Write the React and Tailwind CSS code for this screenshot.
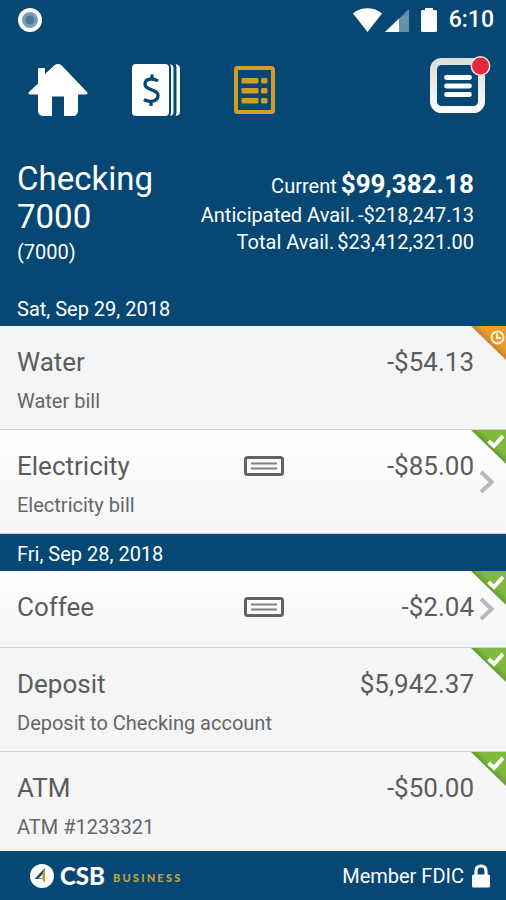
const DAYS = [
  {
    date: 'Sat, Sep 29, 2018',
    items: [
      { id: 1, name: 'Water', memo: 'Water bill', amount: '-$54.13', status: 'pending' },
      {
        id: 2,
        name: 'Electricity',
        memo: 'Electricity bill',
        amount: '-$85.00',
        status: 'cleared',
        hasCheck: true,
      },
    ],
  },
  {
    date: 'Fri, Sep 28, 2018',
    items: [
      { id: 3, name: 'Coffee', amount: '-$2.04', status: 'cleared', hasCheck: true },
      {
        id: 4,
        name: 'Deposit',
        memo: 'Deposit to Checking account',
        amount: '$5,942.37',
        status: 'cleared',
      },
      { id: 5, name: 'ATM', memo: 'ATM #1233321', amount: '-$50.00', status: 'cleared' },
    ],
  },
];

function StatusBar() {
  return (
    <div className="flex h-10 items-center justify-between pl-[18px] pr-3">
      <svg className="h-6 w-6" viewBox="0 0 24 24">
        <circle cx="12" cy="12" r="12" fill="#fff" />
        <circle cx="12" cy="12" r="8" fill="#7c9cb8" />
        <circle cx="12" cy="12" r="4.5" fill="#4f7899" />
      </svg>
      <div className="flex items-center">
        <svg className="h-6 w-[84px]" viewBox="0 0 84 24" fill="#fff">
          <path d="M0 5.500C8-1.400 21-1.400 29 5.500L14.500 24Z" />
          <path d="M56 1V24H32Z" fillOpacity=".4" />
          <path d="M46 10.500V24H32Z" />
          <path d="M70 2h2V0h8v2h2q2 0 2 1v20q0 1-2 1H70q-2 0-2-1V3q0-1 2-1Z" />
        </svg>
        <span className="ml-3 text-[23px] font-medium leading-6">6:10</span>
      </div>
    </div>
  );
}

function HomeIcon() {
  return (
    <svg className="h-[52px] w-[60px]" viewBox="0 0 60 52" fill="#fff">
      <path d="M11 4h5q1 0 1 1v5l9.500-8.800q3.500-2.400 7 0L59 28q1.500 2-1 2.500h-8V47q-.5 5-5 5h-9V32.500H24V52h-9q-5-.5-5-5V30.500H2Q-.5 30 1 28l9-8.500V5q0-1 1-1Z" />
    </svg>
  );
}

function ChecksIcon() {
  return (
    <svg className="h-[52px] w-12" viewBox="0 0 48 52">
      <rect width="37" height="52" rx="4" fill="#fff" />
      <path d="M38 0q3.500 1 3.500 4v44q0 3-3.500 4 1-2 1-4V4q0-2-1-4ZM43.500 0Q48 1 48 4v44q0 3-4.500 4 1-2 1-4V4q0-2-1-4Z" fill="#fff" />
      <path
        d="M26 17c-4-3-13-2.800-13 3 0 7 13 4.500 13 11.500 0 6.500-9 7-14 4M20 10.500v5M19 37v5"
        fill="none"
        stroke="#064773"
        strokeWidth="3.300"
      />
    </svg>
  );
}

function RegisterIcon() {
  return (
    <svg className="h-12 w-[41px]" viewBox="0 0 41 48" fill="#d19d27">
      <rect x="2" y="2" width="37" height="44" rx="1.500" fill="none" stroke="#d19d27" strokeWidth="4" />
      {[12, 22, 32].map((y) => (
        <g key={y}>
          <rect x="7.500" y={y} width="17" height="5.500" rx="1" />
          <rect x="27" y={y} width="6.500" height="5.500" rx="1.500" />
        </g>
      ))}
    </svg>
  );
}

function MenuIcon() {
  return (
    <svg className="h-[57px] w-[61px]" viewBox="0 0 61 57">
      <defs>
        <linearGradient id="menuFrame" x1="0" y1="0" x2="0" y2="1">
          <stop offset="0" stopColor="#e0deda" />
          <stop offset="1" stopColor="#fafafa" />
        </linearGradient>
      </defs>
      <rect x="3.500" y="5.500" width="48" height="48" rx="8" fill="none" stroke="url(#menuFrame)" strokeWidth="7" />
      <path d="M16.500 21.500h23M16.500 30h23M16.500 38.500h23" stroke="#fff" strokeWidth="4.800" strokeLinecap="round" />
      <circle cx="50.500" cy="10" r="9.200" fill="#e5283c" stroke="#f7dfe2" strokeWidth="1.500" />
    </svg>
  );
}

function CheckSlipIcon() {
  return (
    <svg className="h-5 w-10" viewBox="0 0 40 20" fill="none">
      <rect x="1.500" y="1.500" width="37" height="17" rx="2" stroke="#636363" strokeWidth="3" />
      <path d="M7 7.500h26M7 12.500h26" stroke="#808080" strokeWidth="2" />
    </svg>
  );
}

function StatusCorner({ status }) {
  const pending = status === 'pending';
  return (
    <svg className="absolute right-0 top-0 h-[34px] w-9" viewBox="0 0 36 34">
      <defs>
        <linearGradient id="pendingFill" x1="0" y1="1" x2="1" y2="0">
          <stop offset=".45" stopColor="#b97a28" />
          <stop offset=".65" stopColor="#ec9c2f" />
        </linearGradient>
        <linearGradient id="clearedFill" x1="0" y1="1" x2="1" y2="0">
          <stop offset=".45" stopColor="#5a922e" />
          <stop offset=".65" stopColor="#80ba3c" />
        </linearGradient>
      </defs>
      <path d="M1 0H36V34Z" fill={pending ? 'url(#pendingFill)' : 'url(#clearedFill)'} />
      {pending ? (
        <g fill="none" stroke="#fff3dc" strokeWidth="2">
          <circle cx="27.500" cy="11.500" r="6" />
          <path d="M27 7.500v4.500h4" />
        </g>
      ) : (
        <path d="M18.500 11l5.500 5 9-10" fill="none" stroke="#fff" strokeWidth="4" />
      )}
    </svg>
  );
}

function Transaction({ item }) {
  return (
    <li
      className={`relative border-b border-[#cfd2d4] px-[17px] pt-5 ${
        item.memo ? 'pb-4' : 'pb-6'
      } ${item.hasCheck ? 'bg-linear-to-b from-white to-[#f3f5f7]' : 'bg-[#f3f5f7]'}`}
    >
      <div className="grid grid-cols-[6fr_40px_5fr] items-center pr-[15px] text-[26px] leading-8 text-[#5c5c5c]">
        <span>{item.name}</span>
        <span>{item.hasCheck && <CheckSlipIcon />}</span>
        <span className="text-right">{item.amount}</span>
      </div>
      {item.memo && <p className="mt-[11px] text-[20px] leading-6 text-[#666]">{item.memo}</p>}
      {item.hasCheck && (
        <button
          type="button"
          aria-label={`Open ${item.name}`}
          className="absolute inset-y-0 right-3 flex items-center"
        >
          <svg className="h-6 w-[14px]" viewBox="0 0 14 24" fill="none">
            <path d="M1 2l10.500 10L1 22" stroke="#b9b9b9" strokeWidth="4" />
          </svg>
        </button>
      )}
      <StatusCorner status={item.status} />
    </li>
  );
}

export default function App() {
  return (
    <div className="flex h-screen flex-col bg-[#064773] font-['Roboto',sans-serif] text-white">
      <header>
        <StatusBar />
        <nav className="flex h-[100px] items-center justify-between pl-7 pr-[15px]">
          <div className="flex gap-[38px]">
            <button type="button" aria-label="Home" className="flex w-[60px] items-center justify-center">
              <HomeIcon />
            </button>
            <button type="button" aria-label="Checks" className="flex w-[60px] items-center justify-center">
              <ChecksIcon />
            </button>
            <button type="button" aria-label="Register" className="flex w-[60px] items-center justify-center">
              <RegisterIcon />
            </button>
          </div>
          <button type="button" aria-label="Menu" className="mb-3">
            <MenuIcon />
          </button>
        </nav>

        <section className="flex items-start justify-between pb-[25px] pl-[17px] pr-8 pt-5">
          <div>
            <h1 className="text-[33px] leading-[38px]">
              Checking
              <br />
              7000
            </h1>
            <p className="mt-1 text-[20px] leading-6">(7000)</p>
          </div>
          <div className="pt-2 text-[20px] leading-[27px]">
            <p className="flex items-baseline justify-end gap-1 leading-8">
              <span>Current</span>
              <strong className="text-[26px] font-bold">$99,382.18</strong>
            </p>
            <p className="flex justify-end gap-[3px]">
              <span>Anticipated Avail.</span>
              <span>-$218,247.13</span>
            </p>
            <p className="flex justify-end gap-[3px]">
              <span>Total Avail.</span>
              <span>$23,412,321.00</span>
            </p>
          </div>
        </section>
      </header>

      <main className="min-h-0 flex-1 overflow-y-auto [scrollbar-width:none]">
        {DAYS.map((day) => (
          <section key={day.date}>
            <h2 className="flex h-[37px] items-center pl-[17px] pt-0.5 text-[20px] leading-6">{day.date}</h2>
            <ul>
              {day.items.map((item) => (
                <Transaction key={item.id} item={item} />
              ))}
            </ul>
          </section>
        ))}
      </main>

      <footer className="flex h-[49px] shrink-0 items-center justify-between pl-[30px] pr-4">
        <div className="flex items-center font-['Lato',sans-serif] font-bold">
          <svg className="h-6 w-6" viewBox="0 0 24 24">
            <circle cx="12" cy="12" r="12" fill="#fff" />
            <path d="M15 4v10.500L4.500 15Z" fill="#064773" />
            <path d="M15 4v15l-4-5 2-6Z" fill="#c9982b" />
            <path d="M12.500 10v4l-4 .2Z" fill="#fff" />
          </svg>
          <span className="ml-[6px] text-[24px] font-black leading-6">CSB</span>
          <span className="ml-2 pt-1 text-[11px] font-black leading-4 tracking-[0.2em] text-[#c9a03a]">
            BUSINESS
          </span>
        </div>
        <div className="flex items-center gap-2 text-[20px] leading-6">
          Member FDIC
          <svg className="h-6 w-[18px]" viewBox="0 0 18 24">
            <path d="M4 12V7q0-5 5-5t5 5v5" fill="none" stroke="#fff" strokeWidth="3.200" />
            <rect y="10.500" width="18" height="13" rx="1.500" fill="#fff" />
          </svg>
        </div>
      </footer>
    </div>
  );
}
